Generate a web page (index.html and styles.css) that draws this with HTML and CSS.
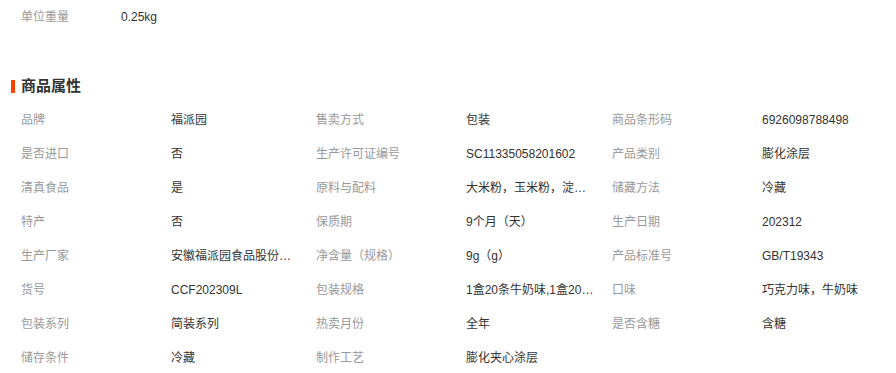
FILE: index.html
```html
<!DOCTYPE html>
<html lang="zh-CN">
<head>
<meta charset="utf-8">
<title>商品属性</title>
<link rel="stylesheet" href="styles.css">
</head>
<body>
<div class="spec">
  <span class="spec-label">单位重量</span>
  <span class="spec-value">0.25kg</span>
</div>
<h3 class="title">商品属性</h3>
<div class="attrs">
  <span class="k">品牌</span><span class="v">福派园</span>
  <span class="k">售卖方式</span><span class="v">包装</span>
  <span class="k">商品条形码</span><span class="v">6926098788498</span>

  <span class="k">是否进口</span><span class="v">否</span>
  <span class="k">生产许可证编号</span><span class="v">SC11335058201602</span>
  <span class="k">产品类别</span><span class="v">膨化涂层</span>

  <span class="k">清真食品</span><span class="v">是</span>
  <span class="k">原料与配料</span><span class="v">大米粉，玉米粉，淀粉，白砂糖</span>
  <span class="k">储藏方法</span><span class="v">冷藏</span>

  <span class="k">特产</span><span class="v">否</span>
  <span class="k">保质期</span><span class="v">9个月（天）</span>
  <span class="k">生产日期</span><span class="v">202312</span>

  <span class="k">生产厂家</span><span class="v">安徽福派园食品股份有限公司</span>
  <span class="k">净含量（规格）</span><span class="v">9g（g）</span>
  <span class="k">产品标准号</span><span class="v">GB/T19343</span>

  <span class="k">货号</span><span class="v">CCF202309L</span>
  <span class="k">包装规格</span><span class="v">1盒20条牛奶味,1盒20条巧克力味</span>
  <span class="k">口味</span><span class="v">巧克力味，牛奶味</span>

  <span class="k">包装系列</span><span class="v">简装系列</span>
  <span class="k">热卖月份</span><span class="v">全年</span>
  <span class="k">是否含糖</span><span class="v">含糖</span>

  <span class="k">储存条件</span><span class="v">冷藏</span>
  <span class="k">制作工艺</span><span class="v">膨化夹心涂层</span>
</div>
</body>
</html>
```
FILE: styles.css
```css
html, body {
  margin: 0;
  padding: 0;
  background: #fff;
}
body {
  font-family: "Liberation Sans", "Noto Sans CJK SC", sans-serif;
  font-size: 12px;
  color: #333;
}
.spec {
  display: flex;
  padding-left: 21px;
  padding-top: 1px;
  line-height: 32px;
  height: 32px;
}
.spec-label {
  width: 100px;
  color: #999;
}
.spec-value {
  color: #333;
}
.title {
  display: flex;
  align-items: center;
  margin: 43px 0 0 0;
  height: 20px;
  line-height: 20px;
  font-size: 15px;
  font-weight: bold;
  color: #333;
}
.title::before {
  content: "";
  display: block;
  width: 4px;
  height: 13px;
  margin-left: 11px;
  margin-right: 6px;
  background: #ff4400;
}
.attrs {
  display: grid;
  grid-template-columns: 150px 145px 150px 146px 150px 1fr;
  grid-auto-rows: 34px;
  margin-top: 7px;
  padding-left: 21px;
  line-height: 34px;
}
.k {
  color: #999;
  white-space: nowrap;
}
.v {
  color: #333;
  max-width: 128px;
  white-space: nowrap;
  overflow: hidden;
  text-overflow: ellipsis;
}
```
